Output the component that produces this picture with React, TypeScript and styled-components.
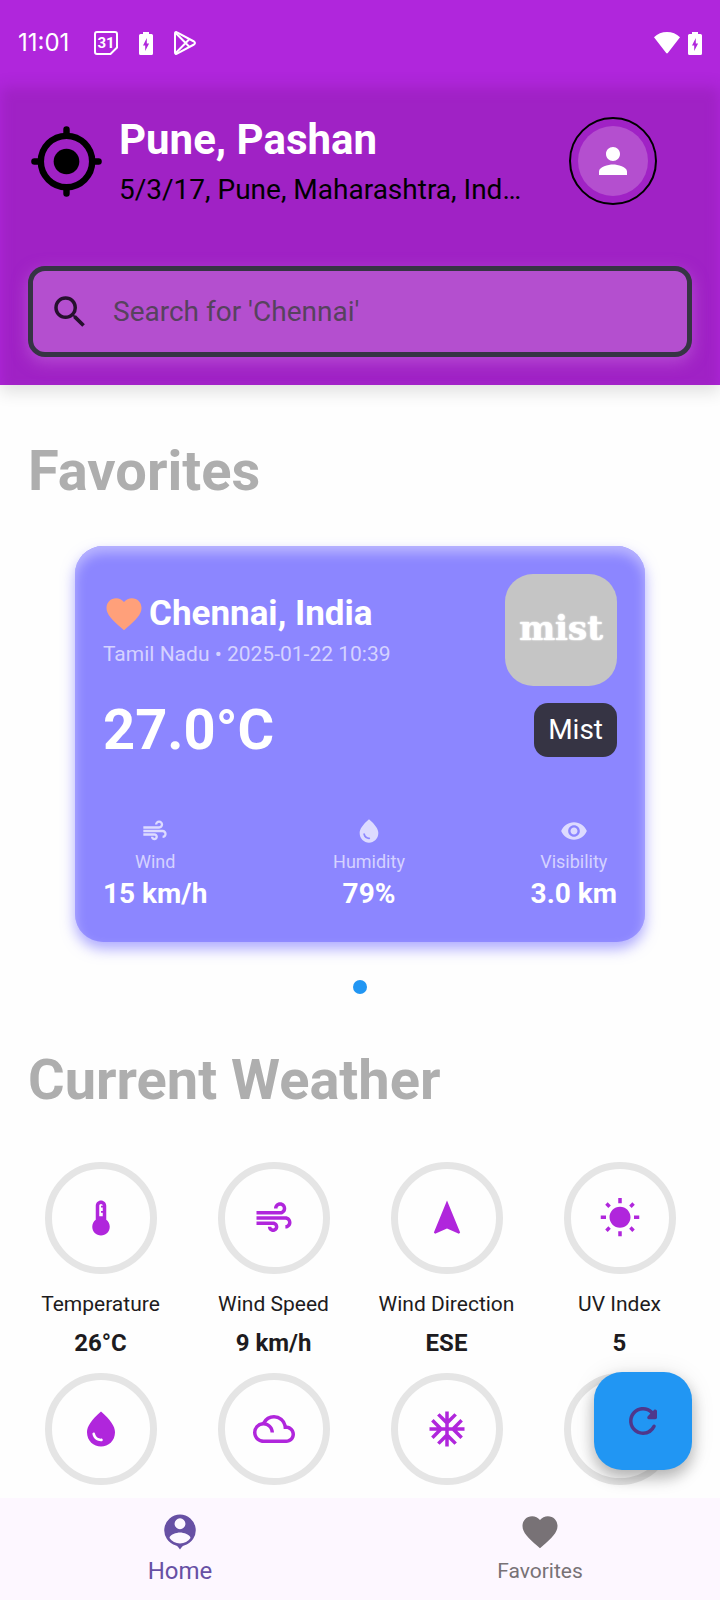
import React from "react";
import styled, { createGlobalStyle } from "styled-components";
import {
  MdAcUnit,
  MdAir,
  MdFavorite,
  MdFilterDrama,
  MdNavigation,
  MdPerson,
  MdSearch,
  MdVisibility,
  MdWaterDrop,
  MdWbSunny,
} from "react-icons/md";

const GlobalStyle = createGlobalStyle`
  *, *::before, *::after { box-sizing: border-box; }
  body {
    margin: 0;
    background: #fefefe;
    color: #1d1b20;
    font-family: Roboto, "Liberation Sans", sans-serif;
  }
  h1, h2, h3, p { margin: 0; }
  button { border: 0; padding: 0; background: none; color: inherit; font: inherit; cursor: pointer; }
`;

const Page = styled.div`
  display: flex;
  flex-direction: column;
  min-height: 100vh;
`;

const StatusBar = styled.div`
  display: flex;
  align-items: center;
  justify-content: space-between;
  height: 80px;
  padding: 6px 18px 0 18px;
  background: #b026dc;
  color: #fff;
`;

const StatusGroup = styled.div<{ $gap: number }>`
  display: flex;
  align-items: center;
  gap: ${(p) => p.$gap}px;
`;

const Clock = styled.time`
  margin-right: 4px;
  font: 400 24px/28px Inter, sans-serif;
`;

const Header = styled.header`
  padding: 36px 28px 28px;
  background: #a022c5;
  box-shadow: inset 0 7px 14px #b026dc, 0 7px 16px rgba(0, 0, 0, 0.12);
`;

const LocationRow = styled.div`
  display: flex;
  align-items: center;
  gap: 14px;
  padding-right: 35px;
`;

const IconButton = styled.button`
  display: flex;
  flex: none;
`;

const LocationText = styled.div`
  display: grid;
  flex: 1;
  gap: 10px;
  min-width: 0;
`;

const Place = styled.h1`
  color: #fff;
  font-size: 42px;
  font-weight: 700;
  line-height: 48px;
`;

const Address = styled.p`
  overflow: hidden;
  color: #000;
  font-size: 28px;
  line-height: 32px;
  text-overflow: ellipsis;
  white-space: nowrap;
`;

const AvatarButton = styled.button`
  flex: none;
  width: 88px;
  height: 88px;
  padding: 7px;
  border: 2px solid #000;
  border-radius: 50%;
`;

const AvatarDisc = styled.span`
  display: grid;
  place-items: center;
  height: 100%;
  border-radius: 50%;
  background: #b44fcf;
  color: #fff;
`;

const SearchForm = styled.form`
  display: flex;
  align-items: center;
  gap: 22px;
  height: 91px;
  margin-top: 60px;
  padding: 0 16px;
  border: 5px solid #363444;
  border-radius: 17px;
  background: #b44fcf;
  box-shadow: 0 5px 16px rgba(196, 104, 220, 0.6);
  color: #25102e;
`;

const SearchInput = styled.input`
  flex: 1;
  min-width: 0;
  padding: 0;
  border: 0;
  outline: 0;
  background: none;
  color: #25102e;
  font: 400 28px/36px Roboto, "Liberation Sans", sans-serif;
  &::placeholder { color: #57425e; opacity: 1; }
`;

const Main = styled.main`
  flex: 1;
  padding-bottom: 12px;
`;

const SectionTitle = styled.h2`
  padding: 54px 28px 0;
  color: #aeaeae;
  font-size: 56px;
  font-weight: 700;
  line-height: 64px;
`;

const FavoriteCard = styled.article`
  margin: 43px 75px 0;
  padding: 28px 28px 32px;
  border-radius: 28px;
  background: #8c86ff;
  box-shadow: inset 0 7px 12px #bab6ff, 0 7px 14px rgba(140, 134, 255, 0.7);
  color: #fff;
`;

const CardRow = styled.div<{ $top?: number }>`
  display: flex;
  align-items: center;
  justify-content: space-between;
  margin-top: ${(p) => p.$top ?? 0}px;
`;

const City = styled.h3`
  display: flex;
  align-items: center;
  gap: 4px;
  font-size: 35px;
  font-weight: 700;
  line-height: 44px;
  svg { color: #ffa07a; }
`;

const CityMeta = styled.p`
  margin-top: 4px;
  color: #d5d2ff;
  font-size: 21px;
  line-height: 28px;
`;

const ConditionTile = styled.div`
  display: grid;
  place-items: center;
  width: 112px;
  height: 112px;
  padding-bottom: 4px;
  border-radius: 28px;
  background: #c5c5c5;
  color: #fff;
  font: 700 34px/40px "DejaVu Serif", serif;
  text-shadow: 0 0 2px #fff, 0 0 1px #fff;
`;

const BigTemperature = styled.p`
  font-size: 56px;
  font-weight: 700;
  line-height: 56px;
`;

const Condition = styled.span`
  padding: 11px 14px;
  border-radius: 14px;
  background: #363444;
  font-size: 28px;
  line-height: 32px;
`;

const Metric = styled.div`
  display: flex;
  flex-direction: column;
  align-items: center;
  svg { color: #dddbff; }
`;

const MetricLabel = styled.span`
  margin-top: 6px;
  color: #d5d2ff;
  font-size: 18px;
  line-height: 22px;
`;

const MetricValue = styled.strong`
  margin-top: 4px;
  font-size: 28px;
  font-weight: 700;
  line-height: 33px;
`;

const Pager = styled.div`
  display: flex;
  justify-content: center;
  padding-top: 38px;
`;

const PagerDot = styled.button`
  width: 14px;
  height: 14px;
  border-radius: 50%;
  background: #2196f3;
`;

const WeatherGrid = styled.div`
  display: grid;
  grid-template-columns: repeat(4, 1fr);
  row-gap: 16px;
  margin-top: 50px;
  padding: 0 14px;
`;

const WeatherItem = styled.div`
  display: flex;
  flex-direction: column;
  align-items: center;
  white-space: nowrap;
`;

const Ring = styled.div`
  display: grid;
  place-items: center;
  width: 112px;
  height: 112px;
  border: 7px solid #e5e5e5;
  border-radius: 50%;
  color: #b026dc;
`;

const ItemLabel = styled.span`
  margin-top: 16px;
  font-size: 21px;
  line-height: 28px;
`;

const ItemValue = styled.strong`
  margin-top: 11px;
  font-size: 24px;
  font-weight: 700;
  line-height: 28px;
`;

const RefreshButton = styled.button`
  position: fixed;
  right: 28px;
  bottom: 130px;
  display: grid;
  place-items: center;
  width: 98px;
  height: 98px;
  border-radius: 28px;
  background: #2196f3;
  box-shadow: 0 8px 16px rgba(0, 0, 0, 0.26), 0 2px 24px rgba(0, 0, 0, 0.1);
  color: #4f378b;
`;

const BottomNav = styled.nav`
  position: sticky;
  bottom: 0;
  display: grid;
  grid-template-columns: 1fr 1fr;
  height: 102px;
  background: #fdf7ff;
`;

const NavLink = styled.a<{ $active?: boolean }>`
  display: flex;
  flex-direction: column;
  align-items: center;
  gap: 2px;
  padding-top: 13px;
  color: ${(p) => (p.$active ? "#6750a4" : "#787276")};
  font-size: ${(p) => (p.$active ? 24 : 21)}px;
  line-height: 33px;
  text-decoration: none;
`;

const LocateIcon = () => (
  <svg width="77" height="77" viewBox="0 0 24 24" fill="none" stroke="#000" strokeWidth="2" strokeLinecap="round">
    <circle cx="12" cy="12" r="8" />
    <circle cx="12" cy="12" r="4" fill="#000" stroke="none" />
    <path d="M12 2v2M12 20v2M2 12h2M20 12h2" />
  </svg>
);

const CalendarIcon = () => (
  <svg width="26" height="26" viewBox="0 0 26 26">
    <path
      d="M4 2h18a2 2 0 0 1 2 2v13.500L17.500 24H4a2 2 0 0 1-2-2V4a2 2 0 0 1 2-2z"
      fill="none"
      stroke="#fff"
      strokeWidth="2"
    />
    <text x="13" y="18" textAnchor="middle" fill="#fff" fontFamily="Roboto, sans-serif" fontSize="15" fontWeight="700">
      31
    </text>
  </svg>
);

const BatteryIcon = () => (
  <svg width="14" height="23" viewBox="0 0 14 23">
    <path
      fill="#fff"
      fillRule="evenodd"
      d="M4 0h6v2h2.500A1.500 1.500 0 0 1 14 3.500v18a1.500 1.500 0 0 1-1.500 1.500h-11A1.500 1.500 0 0 1 0 21.500v-18A1.500 1.500 0 0 1 1.500 2H4zM7.800 6 4 13.500h2.200V19l3.900-7.500H7.800z"
    />
  </svg>
);

const PlayIcon = () => (
  <svg width="24" height="26" viewBox="0 0 24 26" fill="none" stroke="#fff" strokeWidth="2" strokeLinejoin="round">
    <path d="M2 3.500v19c0 1.200 1 1.800 2 1.200l17-9.200c1.300-.8 1.300-2.200 0-3L4 2.300c-1-.6-2 0-2 1.200z" />
    <path d="M2.500 2.800 16.500 17M2.500 23.200 16.500 9" />
  </svg>
);

const WifiIcon = () => (
  <svg width="26" height="22" viewBox="0 0 26 22">
    <path fill="#fff" d="M13 0C8 0 3.500 1.800 0 5.300L12.200 21c.4.600 1.200.600 1.600 0L26 5.300C22.500 1.800 18 0 13 0z" />
  </svg>
);

const ThermometerIcon = () => (
  <svg width="42" height="42" viewBox="0 0 24 24" fill="currentColor">
    <path d="M15 13V5c0-1.660-1.340-3-3-3S9 3.340 9 5v8c-1.210.910-2 2.370-2 4 0 2.760 2.240 5 5 5s5-2.240 5-5c0-1.630-.790-3.090-2-4zm-4-8c0-.550.450-1 1-1s1 .450 1 1h-1v1h1v2h-1v1h1v2h-2V5z" />
  </svg>
);

const RefreshIcon = () => (
  <svg width="42" height="42" viewBox="0 0 24 24" fill="currentColor">
    <path d="M17.650 6.350a7.950 7.950 0 0 0-6.480-2.310c-3.670.370-6.690 3.350-7.100 7.020C3.520 15.910 7.270 20 12 20a7.980 7.980 0 0 0 7.210-4.560c.320-.670-.160-1.440-.900-1.440-.370 0-.720.200-.880.530a5.994 5.994 0 0 1-6.800 3.310c-2.220-.490-4.010-2.300-4.480-4.520A6.002 6.002 0 0 1 12 6c1.660 0 3.140.690 4.220 1.780l-1.510 1.510c-.630.630-.190 1.710.700 1.710H19c.550 0 1-.450 1-1V6.410c0-.890-1.080-1.340-1.710-.710l-.640.650z" />
  </svg>
);

const HomeIcon = () => (
  <svg width="42" height="42" viewBox="0 0 24 24" fill="currentColor">
    <path
      fillRule="evenodd"
      d="M12 2a9 9 0 0 0-2.300 17.700c.9.300 1.600 1.300 2.300 2.300.7-1 1.400-2 2.300-2.300A9 9 0 0 0 12 2zm0 2.200a3.100 3.100 0 1 1 0 6.200 3.100 3.100 0 0 1 0-6.200zm0 14.400c-2.500 0-4.700-1.200-6-3.100.1-2 4-3.200 6-3.200s5.900 1.200 6 3.200c-1.300 1.900-3.500 3.100-6 3.100z"
    />
  </svg>
);

const metrics = [
  { icon: <MdAir size={28} />, label: "Wind", value: "15 km/h" },
  { icon: <MdWaterDrop size={28} />, label: "Humidity", value: "79%" },
  { icon: <MdVisibility size={28} />, label: "Visibility", value: "3.0 km" },
];

const current: { id: string; icon?: React.ReactNode; label?: string; value?: string }[] = [
  { id: "temperature", icon: <ThermometerIcon />, label: "Temperature", value: "26°C" },
  { id: "wind-speed", icon: <MdAir size={42} />, label: "Wind Speed", value: "9 km/h" },
  { id: "wind-direction", icon: <MdNavigation size={42} />, label: "Wind Direction", value: "ESE" },
  { id: "uv", icon: <MdWbSunny size={42} />, label: "UV Index", value: "5" },
  { id: "humidity", icon: <MdWaterDrop size={42} /> },
  { id: "clouds", icon: <MdFilterDrama size={42} /> },
  { id: "snow", icon: <MdAcUnit size={42} /> },
  { id: "more" },
];

export default function App() {
  return (
    <Page>
      <GlobalStyle />
      <StatusBar>
        <StatusGroup $gap={20}>
          <Clock>11:01</Clock>
          <CalendarIcon />
          <BatteryIcon />
          <PlayIcon />
        </StatusGroup>
        <StatusGroup $gap={8}>
          <WifiIcon />
          <BatteryIcon />
        </StatusGroup>
      </StatusBar>

      <Header>
        <LocationRow>
          <IconButton type="button" aria-label="Use my location">
            <LocateIcon />
          </IconButton>
          <LocationText>
            <Place>Pune, Pashan</Place>
            <Address>5/3/17, Pune, Maharashtra, Ind…</Address>
          </LocationText>
          <AvatarButton type="button" aria-label="Profile">
            <AvatarDisc>
              <MdPerson size={42} />
            </AvatarDisc>
          </AvatarButton>
        </LocationRow>
        <SearchForm role="search" onSubmit={(e) => e.preventDefault()}>
          <MdSearch size={42} />
          <SearchInput type="text" aria-label="Search for a city" placeholder="Search for 'Chennai'" />
        </SearchForm>
      </Header>

      <Main>
        <SectionTitle>Favorites</SectionTitle>
        <FavoriteCard>
          <CardRow>
            <div>
              <City>
                <MdFavorite size={42} />
                Chennai, India
              </City>
              <CityMeta>Tamil Nadu • 2025-01-22 10:39</CityMeta>
            </div>
            <ConditionTile>mist</ConditionTile>
          </CardRow>
          <CardRow $top={16}>
            <BigTemperature>27.0°C</BigTemperature>
            <Condition>Mist</Condition>
          </CardRow>
          <CardRow $top={59}>
            {metrics.map((m) => (
              <Metric key={m.label}>
                {m.icon}
                <MetricLabel>{m.label}</MetricLabel>
                <MetricValue>{m.value}</MetricValue>
              </Metric>
            ))}
          </CardRow>
        </FavoriteCard>
        <Pager>
          <PagerDot type="button" aria-label="Page 1" />
        </Pager>

        <SectionTitle>Current Weather</SectionTitle>
        <WeatherGrid>
          {current.map((item) => (
            <WeatherItem key={item.id}>
              <Ring>{item.icon}</Ring>
              {item.label && <ItemLabel>{item.label}</ItemLabel>}
              {item.value && <ItemValue>{item.value}</ItemValue>}
            </WeatherItem>
          ))}
        </WeatherGrid>
      </Main>

      <BottomNav>
        <NavLink href="#home" $active>
          <HomeIcon />
          Home
        </NavLink>
        <NavLink href="#favorites">
          <MdFavorite size={42} />
          Favorites
        </NavLink>
      </BottomNav>
      <RefreshButton type="button" aria-label="Refresh">
        <RefreshIcon />
      </RefreshButton>
    </Page>
  );
}
